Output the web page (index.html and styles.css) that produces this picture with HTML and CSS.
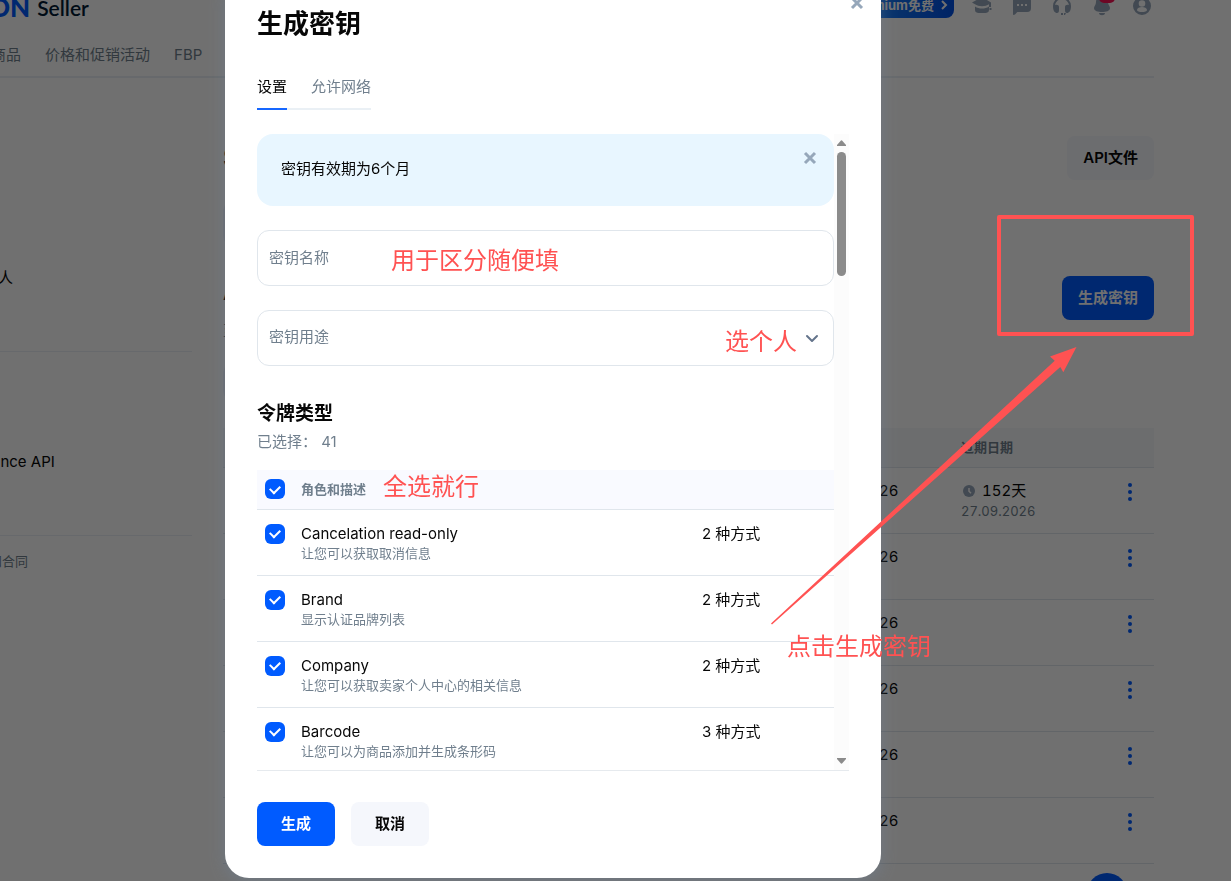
FILE: index.html
```
<!DOCTYPE html>
<html lang="zh-CN">
<head>
<meta charset="utf-8">
<title>生成密钥</title>
<link rel="stylesheet" href="styles.css">
</head>
<body>
<div class="page">
  <header class="header">
    <div class="topbar">
      <div class="logo"><span class="logo-mark">ON</span><span class="logo-name">Seller</span></div>
      <div class="tools">
        <a class="premium" href="#">Premium免费
          <svg width="8" height="12" viewBox="0 0 8 12" fill="none" stroke="currentColor" stroke-width="2"><path d="M2 2l4 4-4 4"/></svg>
        </a>
        <button class="tool" aria-label="学院"><svg viewBox="0 0 24 24"><path d="M12 3L2 8.500l3 1.700c3.500 2.600 10.500 2.600 14 0V13h2V8.500z"/><path d="M5 12.500c4 2.800 10 2.800 14 0v3.500c0 2.200-2 3-3.500 3h-7C7 19 5 18.200 5 16z"/><path d="M19.500 14h2v2h-2z"/></svg></button>
        <button class="tool" aria-label="消息"><svg viewBox="0 0 24 24"><path fill-rule="evenodd" d="M7 3h10c3 0 4 1.500 4 4v7c0 2.500-1 4-4 4H8c-2 0-2 3-4.500 3C3 21 3 20 3 19V7c0-2.500 1-4 4-4zM7 10v2h2v-2zm4 0v2h2v-2zm4 0v2h2v-2z"/></svg></button>
        <button class="tool" aria-label="支持"><svg viewBox="0 0 24 24"><path d="M3 12a9 9 0 0 1 18 0c0 5-2 7-4 7-1.500 0-2-1-2-3v-3c0-2 2-2.500 4-2-1-4-4-6-7-6s-6 2-7 6c2-.5 4 0 4 2v3c0 2-.5 3-2 3-2 0-4-2-4-7z"/><path d="M11 19h2v2h-2zM14 19h2l-1 2h-1z"/></svg></button>
        <button class="tool" aria-label="通知"><svg viewBox="0 0 24 24"><path d="M12 2c-4 0-6 3-6 6 0 3-2 4-2 6 0 3 4 4 8 4s8-1 8-4c0-2-2-3-2-6 0-3-2-6-6-6zM9 19h6c0 3-6 3-6 0z"/></svg><span class="dot"></span></button>
        <button class="tool" aria-label="账户"><svg viewBox="0 0 24 24"><path fill-rule="evenodd" d="M12 3a9 9 0 1 0 0 18 9 9 0 0 0 0-18zm0 3.200a3.300 3.300 0 1 1 0 6.600 3.300 3.300 0 0 1 0-6.600zM7 16c0-4 10-4 10 0 0 2.700-10 2.700-10 0z"/></svg></button>
      </div>
    </div>
    <nav class="nav"><a href="#">商品</a><a href="#">价格和促销活动</a><a href="#">FBP</a></nav>
  </header>
  <div class="columns">
    <aside class="sidebar">
      <div class="side-group"><a class="side-item" href="#">人</a></div>
      <div class="side-group"><a class="side-item side-item-api" href="#">ance API</a></div>
      <a class="side-note" href="#">和合同</a>
    </aside>
    <main class="main">
      <div class="row"><h1>Seller API</h1><button class="btn btn-light">API文件</button></div>
      <div class="strip"></div>
      <div class="row section">
        <div><h2>API</h2><p class="hint">至</p></div>
        <button class="btn btn-blue">生成密钥</button>
      </div>
      <div class="strip strip-low"></div>
      <table class="keys">
        <thead><tr><th></th><th class="c-date"></th><th class="c-exp">过期日期</th><th class="c-menu"></th></tr></thead>
        <tbody>
          <tr><td></td><td>26</td><td><span class="days"><svg width="12" height="12" viewBox="0 0 12 12"><circle cx="6" cy="6" r="6" fill="#96a7ba"/><path d="M6 3v3.200l2 2" stroke="#fff" stroke-width="1.500" fill="none"/></svg>152天</span><span class="until">27.09.2026</span></td><td><button class="more" aria-label="更多"><i></i><i></i><i></i></button></td></tr>
          <tr><td></td><td>26</td><td></td><td><button class="more" aria-label="更多"><i></i><i></i><i></i></button></td></tr>
          <tr><td></td><td>26</td><td></td><td><button class="more" aria-label="更多"><i></i><i></i><i></i></button></td></tr>
          <tr><td></td><td>26</td><td></td><td><button class="more" aria-label="更多"><i></i><i></i><i></i></button></td></tr>
          <tr><td></td><td>26</td><td></td><td><button class="more" aria-label="更多"><i></i><i></i><i></i></button></td></tr>
          <tr><td></td><td>26</td><td></td><td><button class="more" aria-label="更多"><i></i><i></i><i></i></button></td></tr>
        </tbody>
      </table>
    </main>
  </div>
</div>
<button class="fab" aria-label="帮助"></button>

<div class="overlay">
  <section class="modal" role="dialog" aria-labelledby="dialog-title">
    <button class="close modal-close" aria-label="关闭"><svg width="14" height="14" viewBox="0 0 14 14"><path d="M2 2l10 10M12 2L2 12"/></svg></button>
    <h2 class="title" id="dialog-title">生成密钥</h2>
    <div class="tabs" role="tablist"><button class="tab tab-on" role="tab">设置</button><button class="tab" role="tab">允许网络</button></div>
    <div class="scroll">
      <div class="content">
        <div class="alert"><p>密钥有效期为6个月</p><button class="close" aria-label="关闭"><svg width="14" height="14" viewBox="0 0 14 14"><path d="M2 2l10 10M12 2L2 12"/></svg></button></div>
        <input class="field" type="text" placeholder="密钥名称" aria-label="密钥名称">
        <div class="select"><select class="field" aria-label="密钥用途"><option>密钥用途</option></select><svg class="chevron" width="14" height="10" viewBox="0 0 14 10"><path d="M2 2l5 5 5-5"/></svg></div>
        <h3>令牌类型</h3>
        <p class="count">已选择： 41</p>
        <table class="roles">
          <thead><tr><th class="r-check"><input type="checkbox" checked aria-label="全选"></th><th>角色和描述</th><th class="r-num"></th></tr></thead>
          <tbody>
            <tr><td><input type="checkbox" id="r1" checked></td><td><label for="r1">Cancelation read-only</label><small>让您可以获取取消信息</small></td><td>2 种方式</td></tr>
            <tr><td><input type="checkbox" id="r2" checked></td><td><label for="r2">Brand</label><small>显示认证品牌列表</small></td><td>2 种方式</td></tr>
            <tr><td><input type="checkbox" id="r3" checked></td><td><label for="r3">Company</label><small>让您可以获取卖家个人中心的相关信息</small></td><td>2 种方式</td></tr>
            <tr><td><input type="checkbox" id="r4" checked></td><td><label for="r4">Barcode</label><small>让您可以为商品添加并生成条形码</small></td><td>3 种方式</td></tr>
          </tbody>
        </table>
      </div>
      <div class="bar">
        <svg width="9" height="6" viewBox="0 0 9 6"><path d="M3.500 1q1-1.500 2 0L9 5v1H0V5z"/></svg>
        <span class="thumb"></span>
        <svg class="bar-down" width="9" height="6" viewBox="0 0 9 6"><path d="M3.500 5q1 1.500 2 0L9 1V0H0v1z"/></svg>
      </div>
    </div>
    <div class="actions"><button class="btn btn-blue">生成</button><button class="btn btn-light">取消</button></div>
  </section>
</div>

<div class="notes">
  <svg class="arrow" width="1231" height="881" viewBox="0 0 1231 881"><path d="M771 623.500L1054.700 360.700 1050 356.500 1076.500 347 1063.300 372.300 1060.300 367 772 624.500z"/></svg>
  <span class="frame"></span>
  <span class="note note-name">用于区分随便填</span>
  <span class="note note-use">选个人</span>
  <span class="note note-all">全选就行</span>
  <span class="note note-make">点击生成密钥</span>
</div>
</body>
</html>
```

FILE: styles.css
```
* { box-sizing: border-box; }
body {
  margin: 0;
  height: 100vh;
  overflow: hidden;
  position: relative;
  background: #fff;
  color: #070707;
  font: 15px/20px Inter, "Noto Sans CJK SC", sans-serif;
}
button, input, select { font: inherit; color: inherit; }
button { border: 0; background: none; padding: 0; }
a { color: inherit; text-decoration: none; }
h1, h2, h3, p { margin: 0; }

/* page under the dialog */
.page { margin: 0 77px 0 -11px; }
.header { border-bottom: 2px solid #eaf0f5; padding-bottom: 9px; }
.topbar { display: flex; justify-content: space-between; height: 43px; }
.logo { display: flex; align-items: flex-end; gap: 7px; height: 18px; }
.logo-mark { color: #005bff; font: 900 26px/26px Lato, sans-serif; margin-bottom: -2px; }
.logo-name { color: #001a34; font: 600 21px/20px Lato, "Open Sans", sans-serif; }
.tools { display: flex; gap: 16px; height: 18px; align-items: flex-end; }
.premium {
  display: flex; align-items: center; gap: 6px;
  height: 26px; padding: 0 6px 0 12px; border-radius: 8px;
  background: linear-gradient(90deg, #2090ff, #0050e6);
  color: #fff; font-size: 13px; font-weight: 700;
}
.tool { position: relative; width: 24px; height: 24px; }
.tool svg { display: block; width: 24px; height: 24px; fill: #96a7ba; }
.dot { position: absolute; right: -1px; top: -1px; width: 16px; height: 10px; border-radius: 8px; background: #f91155; }
.nav { display: flex; gap: 24px; padding-left: 2px; line-height: 24px; color: #707f8d; }

.columns { display: grid; grid-template-columns: 203px 1fr; gap: 31px; }
.sidebar { padding-top: 90px; }
.side-group { height: 184px; padding-top: 100px; border-bottom: 1px solid #eaf0f5; }
.side-item { display: block; padding-left: 9px; line-height: 20px; }
.side-item-api { padding-left: 3px; }
.side-note { display: block; padding-top: 15px; font-size: 13px; color: #707f8d; }
.main { padding-top: 58px; }
.row { display: flex; justify-content: space-between; align-items: flex-start; }
.row h1 { font-size: 26px; line-height: 44px; }
.row h2 { font-size: 20px; line-height: 34px; }
.hint { padding-top: 9px; line-height: 24px; color: #707f8d; }
.btn { height: 44px; padding: 0 16px; border-radius: 8px; font-weight: 700; white-space: nowrap; }
.btn-light { background: #f5f7fc; font-weight: 600; }
.btn-blue { background: #005bff; color: #fff; }
.strip { width: 260px; height: 47px; margin-top: 20px; border-radius: 12px; background: #eef2f8; }
.strip-low { height: 40px; margin-top: 19px; }
.section { padding-top: 29px; }
table { width: 100%; border-collapse: collapse; table-layout: fixed; text-align: left; }
th, td { padding: 0; vertical-align: top; border-bottom: 1px solid #e0e6ec; }
.keys { margin-top: 26px; font-variant-numeric: tabular-nums; }
.keys th { height: 39px; background: #f5f7fa; vertical-align: middle; font-size: 13px; color: #707f8d; }
.keys td { height: 66px; padding-top: 13px; }
.c-date { width: 82px; }
.c-exp { width: 145px; }
.c-menu { width: 48px; }
.days { display: flex; align-items: center; gap: 7px; padding-left: 2px; }
.until { display: block; font-size: 13px; color: #707f8d; }
.more { display: flex; flex-direction: column; gap: 3px; margin: 2px auto 0; }
.more i { width: 4px; height: 4px; border-radius: 2px; background: #005bff; }
.fab { position: absolute; left: 1087px; top: 873px; width: 40px; height: 40px; border-radius: 20px; background: #005bff; }

/* dialog */
.overlay {
  position: fixed; inset: 0;
  display: flex; justify-content: center; align-items: flex-end;
  padding: 0 125px 3px 0;
  background: rgba(0, 0, 0, .56);
}
.modal {
  position: relative;
  width: 656px; max-width: 100%;
  padding: 32px;
  border-radius: 24px;
  background: #fff;
  box-shadow: 0 4px 16px rgba(112, 134, 160, .4);
}
.title { font-size: 26px; line-height: 34px; }
.close { display: grid; place-items: center; width: 24px; height: 24px; }
.close path, .chevron path { fill: none; stroke: #96a7ba; stroke-width: 2; stroke-linecap: round; stroke-linejoin: round; }
.close path { stroke-width: 3; stroke-linecap: butt; }
.modal-close { position: absolute; right: 12px; top: 16px; }
.tabs { display: flex; width: fit-content; margin: 22px 0 24px; }
.tab { padding: 12px 0 9px; line-height: 24px; color: #707f8d; border-bottom: 2px solid #eaf0f5; }
.tab + .tab { padding-left: 24px; }
.tab-on { color: #070707; border-color: #1667ff; }
.scroll {
  display: grid; grid-template-columns: 1fr 15px;
  height: calc(100vh - 244px);
  overflow: hidden;
  border-bottom: 1px solid #e6eaee;
}
.bar { display: flex; flex-direction: column; align-items: center; height: calc(100vh - 245px); padding: 6px 0; background: #fcfcfc; }
.bar svg { fill: #8b8b8b; }
.thumb { width: 9px; height: 124px; margin-top: 6px; border-radius: 5px; background: #8b8b8b; }
.bar-down { margin-top: auto; }
.content { min-width: 0; }
.alert { display: flex; justify-content: space-between; padding: 12px 12px 12px 24px; height: 72px; border-radius: 16px; background: #e8f6ff; }
.alert p { line-height: 46px; }
.field {
  display: block; width: 100%; height: 56px; margin-top: 24px; padding: 0 11px 2px;
  border: 1px solid #e0e6ec; border-radius: 12px; background: #fff; color: #707f8d;
  appearance: none; outline: 0;
}
.field::placeholder { color: #707f8d; opacity: 1; }
.select { position: relative; }
.chevron { position: absolute; right: 15px; bottom: 22px; }
.chevron path { stroke: #64748b; }
h3 { margin-top: 36px; font-size: 19px; line-height: 24px; }
.count { margin-top: 4px; line-height: 24px; color: #707f8d; }
.roles { margin-top: 16px; }
.roles th { height: 39px; background: #f9faff; vertical-align: middle; font-size: 13px; color: #707f8d; }
.roles td { height: 66px; padding-top: 14px; }
.roles .r-check { width: 44px; }
.r-num { width: 132px; }
.roles label { display: block; }
.roles small { display: block; font-size: 13px; line-height: 18px; color: #707f8d; }
.roles input {
  appearance: none; display: grid; place-items: center;
  width: 20px; height: 20px; margin: 0 0 0 8px; border-radius: 6px; background: #005bff;
}
.roles input::before {
  content: ""; width: 8px; height: 5px; margin-bottom: 2px;
  border: solid #fff; border-width: 0 0 2px 2px; transform: rotate(-45deg);
}
.actions { display: flex; gap: 16px; padding-top: 31px; }
.actions .btn { padding: 0 24px; }

/* red markup */
.notes { position: absolute; inset: 0; overflow: hidden; pointer-events: none; }
.arrow { position: absolute; left: 0; top: 0; fill: #ff5252; }
.frame { position: absolute; left: 997px; top: 215px; width: 197px; height: 121px; border: 4px solid #ff5252; border-radius: 2px; }
.note { position: absolute; font: 24px/32px "Noto Sans CJK SC", sans-serif; color: #ff5252; white-space: nowrap; }
.note-name { left: 391px; top: 243px; }
.note-use { left: 725px; top: 324px; }
.note-all { left: 383px; top: 469px; }
.note-make { left: 787px; top: 629px; }
```
